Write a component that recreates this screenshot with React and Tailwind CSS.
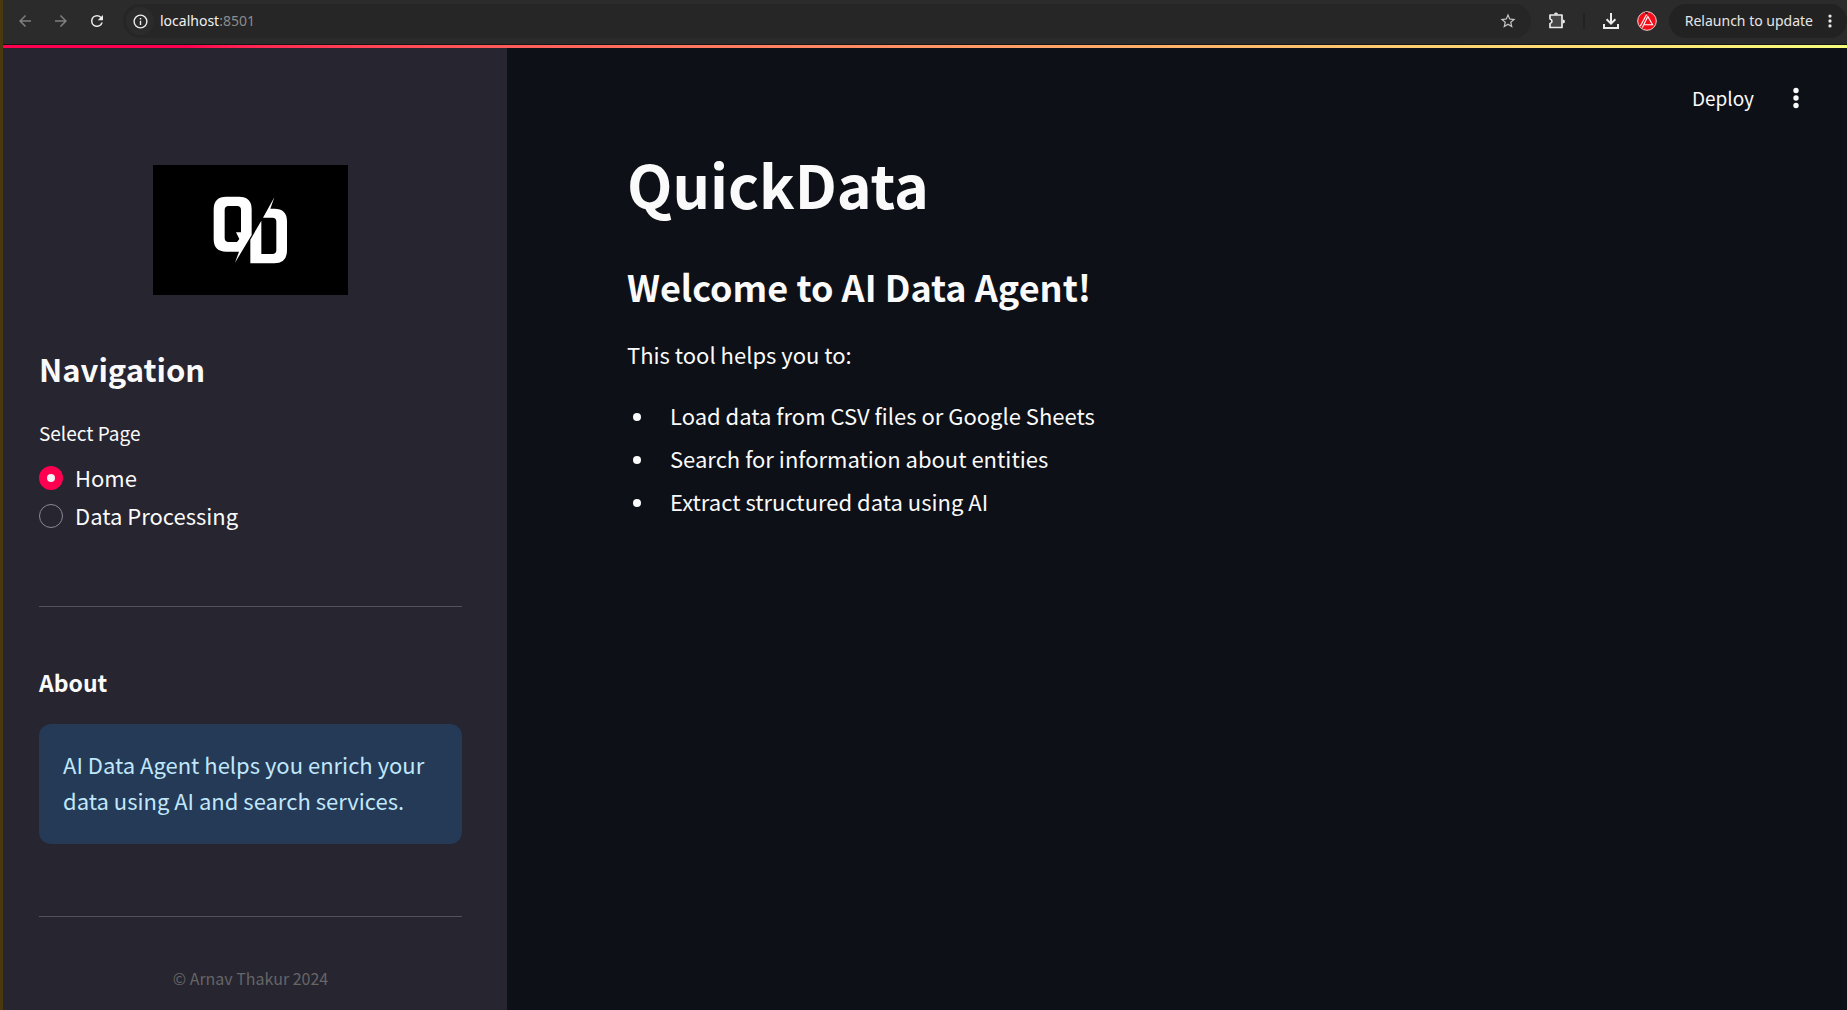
import { useState } from "react";

const features = [
  "Load data from CSV files or Google Sheets",
  "Search for information about entities",
  "Extract structured data using AI",
];

const pages = ["Home", "Data Processing"];

function Icon({ children, className = "size-5" }) {
  return (
    <svg viewBox="0 0 24 24" className={className} fill="currentColor" aria-hidden="true">
      {children}
    </svg>
  );
}

function BrowserBar() {
  return (
    <div className="flex h-[45px] items-center border-b border-[#141414] bg-[#2b2b2b] pb-0.5 pl-2.5 font-['Noto_Sans',sans-serif] text-[14px]">
      <button aria-label="Back" className="flex w-6 justify-center text-[#7f7f7f]">
        <Icon className="size-[18px]">
          <path d="M20 11H7.83l5.59-5.59L12 4l-8 8 8 8 1.41-1.41L7.83 13H20z" />
        </Icon>
      </button>
      <button aria-label="Forward" className="ml-3 flex w-6 justify-center text-[#7f7f7f]">
        <Icon className="size-[18px]">
          <path d="M4 11h12.17l-5.59-5.59L12 4l8 8-8 8-1.41-1.41L16.17 13H4z" />
        </Icon>
      </button>
      <button aria-label="Reload" className="ml-3 flex w-6 justify-center text-[#ececec]">
        <Icon className="size-[18px]">
          <path d="M17.65 6.35A7.96 7.96 0 0 0 12 4a8 8 0 1 0 7.73 10h-2.08A6 6 0 1 1 12 6c1.66 0 3.14.69 4.22 1.78L13 11h7V4z" />
        </Icon>
      </button>
      <div className="ml-3.5 flex h-[34px] min-w-0 flex-1 items-center rounded-full bg-[#262626] pr-3.5 pl-[3px]">
        <button aria-label="Site information" className="flex size-7 items-center justify-center rounded-full bg-[#2b2b2b] text-[#ececec]">
          <Icon className="size-[17px]">
            <path d="M11 7h2v2h-2zm0 4h2v6h-2zm1-9a10 10 0 1 0 0 20 10 10 0 0 0 0-20zm0 18a8 8 0 1 1 0-16 8 8 0 0 1 0 16z" />
          </Icon>
        </button>
        <p className="ml-1.5 flex-1 text-[#f0f0f0]">
          localhost<span className="text-[#8c8c8c]">:8501</span>
        </p>
        <button aria-label="Bookmark this tab" className="text-[#c7c7c7]">
          <Icon className="size-[18px]">
            <path d="M22 9.24l-7.19-.62L12 2 9.19 8.63 2 9.24l5.46 4.73L5.82 21 12 17.27 18.18 21l-1.63-7.03zM12 15.4l-3.76 2.27 1-4.28-3.32-2.88 4.38-.38L12 6.1l1.71 4.04 4.38.38-3.32 2.88 1 4.28z" />
          </Icon>
        </button>
      </div>
      <button aria-label="Extensions" className="ml-4 text-[#ececec]">
        <svg viewBox="0 0 20 20" className="size-5" fill="none" stroke="currentColor" strokeWidth="1.7" strokeLinejoin="round" aria-hidden="true">
          <path d="M3 4h12v12.5H3v-4c2.6-.5 2.6-4 0-4.5z" fill="#474747" />
          <path d="M7 3.6a2 2.2 0 0 1 4 0zM15.8 8.4a2.2 2 0 0 1 0 4z" fill="currentColor" stroke="none" />
        </svg>
      </button>
      <div className="ml-4 h-4 w-0.5 bg-[#222222]" />
      <button aria-label="Downloads" className="ml-4 text-[#ececec]">
        <svg viewBox="0 0 20 20" className="size-5" fill="none" stroke="currentColor" strokeWidth="2" aria-hidden="true">
          <path d="M10 2v10M5.6 8.2L10 12.6l4.4-4.4M3 13v4h14v-4" />
        </svg>
      </button>
      <button aria-label="Profile" className="ml-4">
        <svg viewBox="0 0 20 20" className="size-5" fill="none" aria-hidden="true">
          <circle cx="10" cy="10" r="9.3" fill="#f20f1b" stroke="#f3d3d3" strokeWidth="1" />
          <path d="M7.6 1.2L11 1l-1.4 3z" fill="#5b0a0f" />
          <path d="M3.4 15L9.6 3.4M5.4 16.4L10.8 5.4L15.6 13.8H6.8" stroke="#ffffff" strokeWidth="1.1" />
        </svg>
      </button>
      <button className="ml-3 flex h-[34px] items-center rounded-full bg-[#222222] pr-2 pl-4 text-[#e6e6e6]">
        Relaunch to update
        <Icon className="ml-2 size-[18px]">
          <circle cx="12" cy="5.4" r="2.2" />
          <circle cx="12" cy="12" r="2.2" />
          <circle cx="12" cy="18.6" r="2.2" />
        </Icon>
      </button>
    </div>
  );
}

function Logo() {
  return (
    <svg viewBox="0 0 585 390" className="mx-auto w-[195px] bg-black" role="img" aria-label="QD logo">
      <g fill="#ffffff">
        <path
          fillRule="evenodd"
          d="M220 95H258Q296 95 296 133V210L246 293L258 260H220Q182 260 182 222V133Q182 95 220 95ZM227 123Q215 123 215 135V219Q215 231 227 231H252L259 222L249 202H264V135Q264 123 252 123Z"
        />
        <path d="M364 97L352 131H364Q402 131 402 169V256Q402 295 364 295H292V224L325 167V267H358Q370 267 370 255V170Q370 158 358 158H330Z" />
      </g>
    </svg>
  );
}

function Sidebar() {
  const [page, setPage] = useState("Home");
  return (
    <aside className="w-[504px] shrink-0 bg-[#272530] pt-[117px] pr-[45px] pb-5 pl-9">
      <Logo />
      <h2 className="mt-[52px] text-[31px] leading-[44px] font-bold">Navigation</h2>
      <fieldset className="mt-7">
        <legend className="text-[19px] leading-7">Select Page</legend>
        <div className="mt-[15px] flex flex-col gap-1.5">
          {pages.map((name) => (
            <label key={name} className="flex h-8 items-center gap-3">
              <input
                type="radio"
                name="page"
                checked={page === name}
                onChange={() => setPage(name)}
                className="size-6 appearance-none rounded-full border border-[#8b8a91] checked:border-[8px] checked:border-[#ff0051] checked:bg-[#f3f3f6]"
              />
              <span className="pb-0.5 leading-[30px]">{name}</span>
            </label>
          ))}
        </div>
      </fieldset>
      <hr className="mt-[74px] border-[#53515b]" />
      <h3 className="mt-[57px] text-[23px] leading-9 font-bold">About</h3>
      <div className="mt-6 rounded-xl bg-[#243a56] px-6 pt-[22px] pb-[26px] text-[#c0e7fc]">
        <p>AI Data Agent helps you enrich your data using AI and search services.</p>
      </div>
      <hr className="mt-[72px] border-[#53515b]" />
      <p className="mt-[49px] text-center text-[16px] leading-6 text-[#666666]">© Arnav Thakur 2024</p>
    </aside>
  );
}

export default function App() {
  return (
    <div className="flex min-h-screen flex-col border-l-[3px] border-[#4a390f] bg-[#0d1017] font-['Noto_Sans_CJK_SC',sans-serif] text-[22px] leading-9 text-[#fafafa]">
      <BrowserBar />
      <div className="h-[3px] bg-linear-to-r from-[#ff0051] from-10% to-[#f7fd7c]" />
      <div className="flex flex-1">
        <Sidebar />
        <div className="min-w-0 flex-1">
          <header className="flex h-24 items-center justify-end gap-[30px] pt-1 pr-[39px]">
            <button className="text-[19px] leading-7">Deploy</button>
            <button aria-label="Main menu">
              <Icon className="size-6">
                <circle cx="12" cy="4.5" r="2.7" />
                <circle cx="12" cy="12" r="2.7" />
                <circle cx="12" cy="19.5" r="2.7" />
              </Icon>
            </button>
          </header>
          <main className="px-[120px]">
            <h1 className="text-[59px] leading-[80px] font-bold">QuickData</h1>
            <h2 className="mt-9 text-[36px] leading-[52px] font-bold">Welcome to AI Data Agent!</h2>
            <p className="mt-6">This tool helps you to:</p>
            <ul className="mt-[25px] flex flex-col gap-[7px]">
              {features.map((text) => (
                <li key={text} className="flex items-center gap-[29px] pl-1.5 before:mt-1 before:size-2 before:rounded-full before:bg-[#fafafa]">
                  {text}
                </li>
              ))}
            </ul>
          </main>
        </div>
      </div>
    </div>
  );
}
